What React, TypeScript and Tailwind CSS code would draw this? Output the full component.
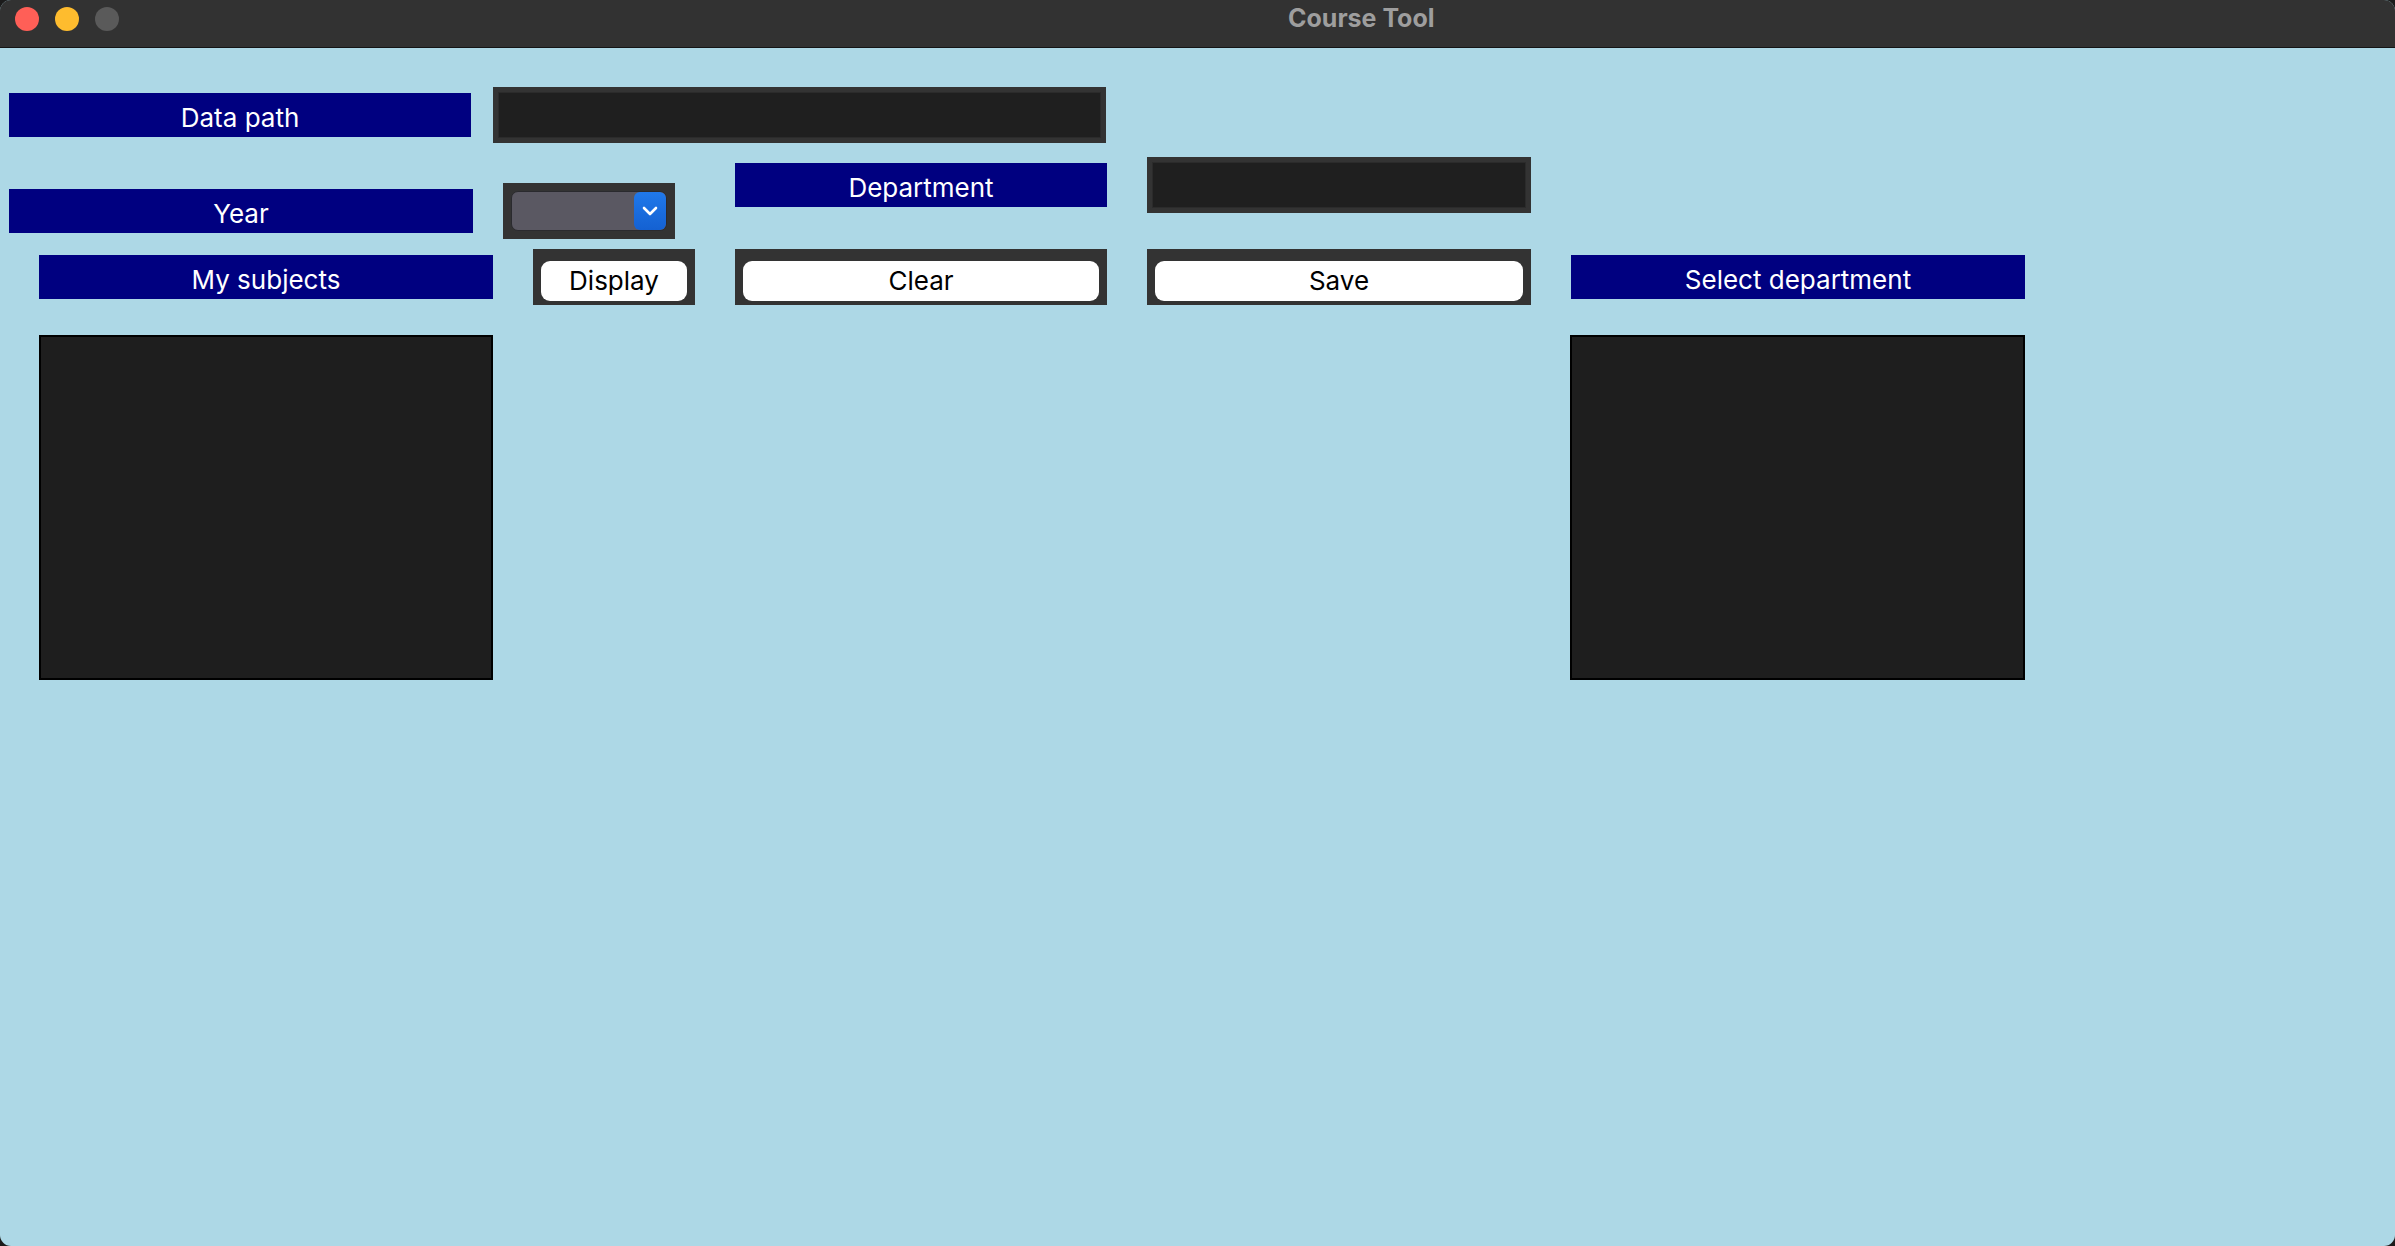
import React from "react";

const font = { fontFamily: "Inter, 'Noto Sans', sans-serif" };

function Label({ text, className = "" }: { text: string; className?: string }) {
  return (
    <div
      className={`h-[44px] bg-[#000080] text-white text-[26px] leading-none pt-[5px] flex items-center justify-center shrink-0 ${className}`}
    >
      {text}
    </div>
  );
}

function Entry({ className = "" }: { className?: string }) {
  return (
    <div className={`h-[56px] bg-[#333333] p-[5px] shrink-0 ${className}`}>
      <div className="w-full h-full bg-[#1f1f1f] border border-[#2b2b2b]" />
    </div>
  );
}

function Button({ text, className = "" }: { text: string; className?: string }) {
  return (
    <div className={`h-[56px] bg-[#333333] pt-[12px] pb-[4px] px-[8px] shrink-0 ${className}`}>
      <div className="w-full h-full bg-white rounded-[9px] flex items-center justify-center text-black text-[26px] leading-none">
        {text}
      </div>
    </div>
  );
}

function ListBox({ className = "" }: { className?: string }) {
  return <div className={`h-[345px] bg-[#1e1e1e] border-[2px] border-black shrink-0 ${className}`} />;
}

export default function App() {
  return (
    <div className="w-screen h-screen bg-[#1b1b1b]" style={font}>
      <div className="w-full h-full rounded-[11px] overflow-hidden bg-[#add8e6] flex flex-col">
        {/* Title bar */}
        <div className="h-[48px] bg-[#323232] border-b border-[#151515] flex items-start shrink-0">
          <div className="flex items-center gap-[16px] pl-[15px] pt-[7px]">
            <div className="w-[24px] h-[24px] rounded-full bg-[#ff5f57]" />
            <div className="w-[24px] h-[24px] rounded-full bg-[#febc2e]" />
            <div className="w-[24px] h-[24px] rounded-full bg-[#5a5a5a]" />
          </div>
          <div className="ml-[1169px] pt-[6px] text-[25px] font-bold text-[#9e9e9e] leading-none">Course Tool</div>
        </div>

        {/* Row 1 */}
        <div className="flex items-center mt-[39px]">
          <Label text="Data path" className="ml-[9px] w-[462px]" />
          <Entry className="ml-[22px] w-[613px]" />
        </div>

        {/* Row 2 */}
        <div className="flex items-start mt-[14px]">
          <Label text="Year" className="ml-[9px] w-[464px] mt-[32px]" />
          <div className="ml-[30px] mt-[26px] w-[172px] h-[56px] bg-[#333333] p-[8px] shrink-0">
            <div className="w-full h-full rounded-[7px] bg-[#5a5862] border border-[#2a2a2e] flex justify-end overflow-hidden">
              <div className="w-[32px] h-full rounded-[6px] bg-gradient-to-b from-[#2079ea] to-[#1461d2] flex items-center justify-center">
                <svg width="18" height="12" viewBox="0 0 18 12">
                  <path d="M3 3 L9 9 L15 3" fill="none" stroke="white" strokeWidth="2.6" strokeLinecap="round" strokeLinejoin="round" />
                </svg>
              </div>
            </div>
          </div>
          <Label text="Department" className="ml-[60px] w-[372px] mt-[6px]" />
          <Entry className="ml-[40px] w-[384px]" />
        </div>

        {/* Row 3 */}
        <div className="flex items-center gap-[40px] pl-[39px] mt-[10px]">
          <Label text="My subjects" className="w-[454px]" />
          <Button text="Display" className="w-[162px]" />
          <Button text="Clear" className="w-[372px]" />
          <Button text="Save" className="w-[384px]" />
          <Label text="Select department" className="w-[454px]" />
        </div>

        {/* Row 4 */}
        <div className="flex items-start mt-[30px]">
          <ListBox className="ml-[39px] w-[454px]" />
          <ListBox className="ml-[1077px] w-[455px]" />
        </div>
      </div>
    </div>
  );
}
